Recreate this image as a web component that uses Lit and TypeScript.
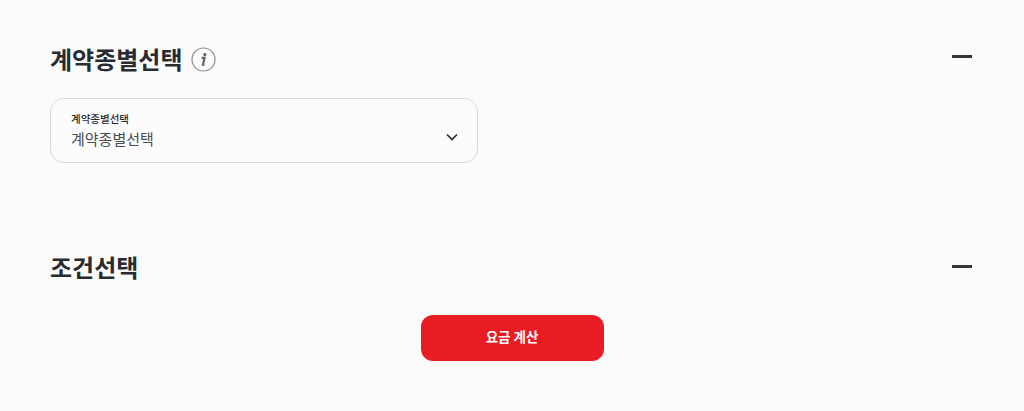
import { LitElement, html, css } from "lit";
import { customElement } from "lit/decorators.js";

@customElement("app-root")
export class AppRoot extends LitElement {
  static styles = css`
    :host {
      display: block;
      width: 1024px;
      height: 411px;
      overflow: hidden;
      background: #fcfcfc;
      font-family: "Noto Sans CJK KR", "Noto Sans", sans-serif;
      color: #282b30;
    }
    .page {
      display: flex;
      flex-direction: column;
      gap: 27px;
      padding: 12px 18px 0;
    }
    .card {
      background: #fbfbfb;
      border-radius: 24px;
      padding: 27px 32px 0;
    }
    .first { height: 156px; }
    .second { height: 148px; padding-top: 25px; }
    .head {
      display: flex;
      align-items: center;
      height: 40px;
    }
    h2 {
      margin: 0;
      font-size: 24px;
      line-height: 40px;
      font-weight: 700;
    }
    .info { margin-left: 9px; display: block; }
    .minus {
      margin: 0 2px 4.6px auto;
      width: 20px;
      height: 2.5px;
      background: #33363b;
    }
    .second .minus { margin-bottom: 1px; }
    .select {
      box-sizing: border-box;
      width: 428px;
      height: 64.5px;
      margin-top: 19px;
      padding: 0 19px 0 20px;
      background: #fcfcfc;
      border: 1.5px solid #d3dae4;
      border-radius: 14px;
      display: flex;
      justify-content: space-between;
      align-items: center;
    }
    .select-text { display: flex; flex-direction: column; gap: 1px; }
    .label {
      font-size: 10.5px;
      line-height: 16px;
      font-weight: 500;
    }
    .value {
      font-size: 15px;
      line-height: 22px;
      color: #4a4d52;
      font-weight: 400;
    }
    .chev { display: block; margin-top: 14px; }
    .actions {
      display: flex;
      justify-content: center;
      margin-top: 28px;
    }
    button {
      width: 183px;
      height: 45.5px;
      padding: 0 0 3px;
      border: 0;
      border-radius: 12px;
      background: #e91c24;
      color: #fff;
      font: 700 13.5px "Noto Sans CJK KR", sans-serif;
    }
  `;

  render() {
    return html`
      <div class="page">
        <section class="card first">
          <div class="head">
            <h2>계약종별선택</h2>
            <svg class="info" width="25" height="25" viewBox="0 0 25 25">
              <circle cx="12.5" cy="12.5" r="11.5" fill="none" stroke="#8b8d90" stroke-width="1.2"/>
              <path d="M10.6 10.8h3L12 17.6h1.4" fill="none" stroke="#606367" stroke-width="2.2"/>
              <circle cx="13.9" cy="7.6" r="1.6" fill="#606367"/>
            </svg>
            <span class="minus"></span>
          </div>
          <div class="select">
            <div class="select-text">
              <span class="label">계약종별선택</span>
              <span class="value">계약종별선택</span>
            </div>
            <svg class="chev" width="12" height="8" viewBox="0 0 12 8">
              <path d="M1 1.5l5 5 5-5" fill="none" stroke="#2b2e33" stroke-width="1.7"/>
            </svg>
          </div>
        </section>
        <section class="card second">
          <div class="head">
            <h2>조건선택</h2>
            <span class="minus"></span>
          </div>
          <div class="actions"><button>요금 계산</button></div>
        </section>
      </div>
    `;
  }
}
